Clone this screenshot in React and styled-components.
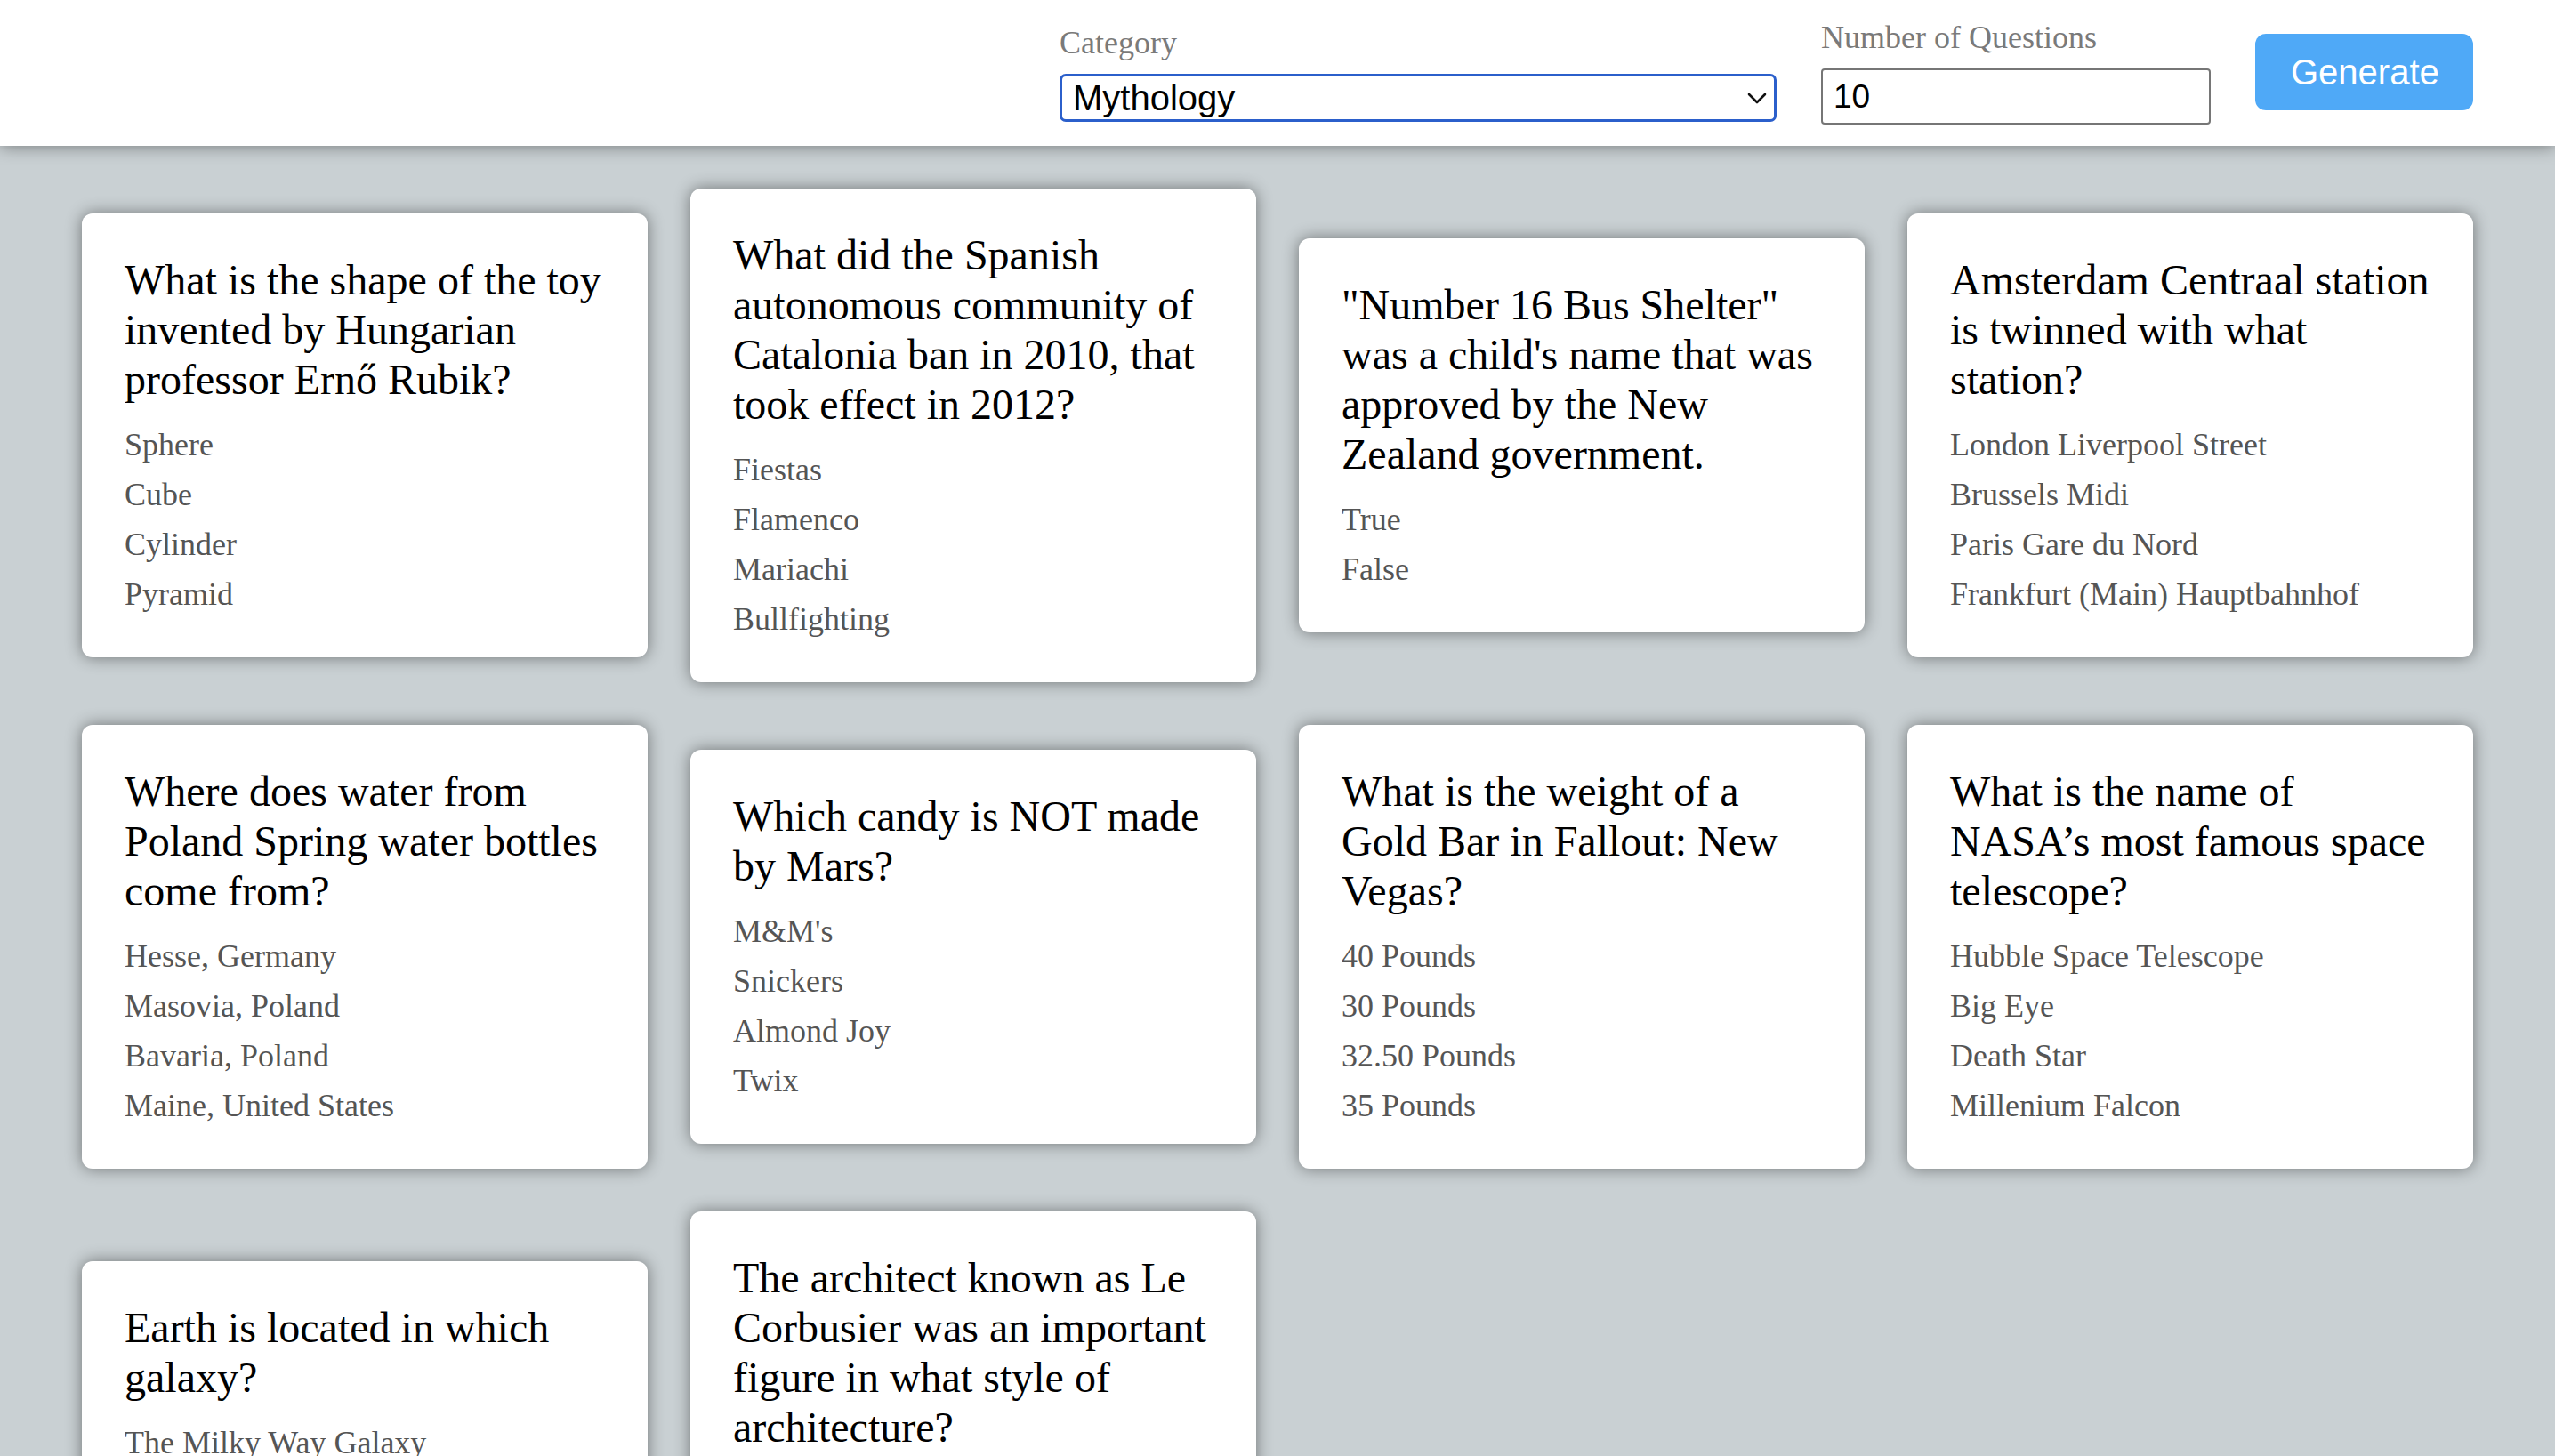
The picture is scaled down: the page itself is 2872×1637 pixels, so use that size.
import React from "react";
import styled, { createGlobalStyle } from "styled-components";

const GlobalStyle = createGlobalStyle`
  html, body {
    margin: 0;
    padding: 0;
    background: #c9d0d3;
    font-family: "Liberation Serif", "Times New Roman", serif;
  }
  * { box-sizing: border-box; }
`;

const Header = styled.header`
  position: relative;
  z-index: 2;
  height: 164px;
  background: #ffffff;
  box-shadow: 0 0 18px rgba(0, 0, 0, 0.45);
  display: flex;
  align-items: center;
  justify-content: flex-end;
  padding: 0 92px;
  gap: 50px;
`;

const Field = styled.div`
  display: flex;
  flex-direction: column;
  gap: 14px;
  width: ${(p) => p.$width}px;
  margin-top: ${(p) => p.$offset || 0}px;
`;

const Label = styled.label`
  font-family: "Liberation Serif", "Times New Roman", serif;
  font-size: 36px;
  color: #7a7a7a;
  line-height: normal;
`;

const SelectWrap = styled.div`
  position: relative;
  height: 54px;
`;

const Select = styled.select`
  appearance: none;
  -webkit-appearance: none;
  width: 100%;
  height: 54px;
  border: 3px solid #2b5fcb;
  border-radius: 7px;
  background: #ffffff;
  font-family: "Liberation Sans", Arial, sans-serif;
  font-size: 40px;
  color: #000;
  padding: 0 50px 0 12px;
  outline: none;
`;

const Chevron = styled.svg`
  position: absolute;
  right: 11px;
  top: 21px;
  width: 22px;
  height: 13px;
  pointer-events: none;
`;

const Input = styled.input`
  width: 100%;
  height: 63px;
  border: 2px solid #767676;
  border-radius: 4px;
  background: #ffffff;
  font-family: "Liberation Sans", Arial, sans-serif;
  font-size: 37px;
  color: #000;
  padding: 0 12px;
  outline: none;
`;

const Button = styled.button`
  height: 86px;
  width: 245px;
  margin-top: -2px;
  border: none;
  border-radius: 12px;
  background: #4fa9f7;
  color: #ffffff;
  font-family: "Liberation Sans", Arial, sans-serif;
  font-size: 40px;
  padding: 0 40px;
  cursor: pointer;
`;

const Grid = styled.main`
  display: grid;
  grid-template-columns: repeat(4, 1fr);
  column-gap: 48px;
  row-gap: 48px;
  align-items: center;
  padding: 48px 92px;
`;

const Card = styled.article`
  background: #ffffff;
  border-radius: 12px;
  box-shadow: 0 0 18px rgba(0, 0, 0, 0.45);
  padding: 47px 48px 50px;
`;

const Question = styled.h2`
  margin: 0 0 25px;
  font-family: "Liberation Serif", "Times New Roman", serif;
  font-weight: normal;
  font-size: 48px;
  line-height: 56px;
  color: #000;
`;

const Answers = styled.ul`
  list-style: none;
  margin: 0;
  padding: 0;
  display: flex;
  flex-direction: column;
  gap: 15px;
`;

const Answer = styled.li`
  font-family: "Liberation Serif", "Times New Roman", serif;
  font-size: 36px;
  line-height: 41px;
  color: #555555;
`;

const questions = [
  {
    q: "What is the shape of the toy invented by Hungarian professor Ernő Rubik?",
    a: ["Sphere", "Cube", "Cylinder", "Pyramid"],
  },
  {
    q: "What did the Spanish autonomous community of Catalonia ban in 2010, that took effect in 2012?",
    a: ["Fiestas", "Flamenco", "Mariachi", "Bullfighting"],
  },
  {
    q: "\"Number 16 Bus Shelter\" was a child's name that was approved by the New Zealand government.",
    a: ["True", "False"],
  },
  {
    q: "Amsterdam Centraal station is twinned with what station?",
    a: ["London Liverpool Street", "Brussels Midi", "Paris Gare du Nord", "Frankfurt (Main) Hauptbahnhof"],
  },
  {
    q: "Where does water from Poland Spring water bottles come from?",
    a: ["Hesse, Germany", "Masovia, Poland", "Bavaria, Poland", "Maine, United States"],
  },
  {
    q: "Which candy is NOT made by Mars?",
    a: ["M&M's", "Snickers", "Almond Joy", "Twix"],
  },
  {
    q: "What is the weight of a Gold Bar in Fallout: New Vegas?",
    a: ["40 Pounds", "30 Pounds", "32.50 Pounds", "35 Pounds"],
  },
  {
    q: "What is the name of NASA’s most famous space telescope?",
    a: ["Hubble Space Telescope", "Big Eye", "Death Star", "Millenium Falcon"],
  },
  {
    q: "Earth is located in which galaxy?",
    a: ["The Milky Way Galaxy", "The Black Eye Galaxy", "The Sombrero Galaxy", "The Andromeda Galaxy"],
  },
  {
    q: "The architect known as Le Corbusier was an important figure in what style of architecture?",
    a: ["Modernist", "Brutalist", "Art Deco", "Gothic"],
  },
];

export default function App() {
  return (
    <>
      <GlobalStyle />
      <Header>
        <Field $width={806}>
          <Label>Category</Label>
          <SelectWrap>
            <Select defaultValue="mythology">
              <option value="mythology">Mythology</option>
              <option value="general">General Knowledge</option>
              <option value="history">History</option>
            </Select>
            <Chevron viewBox="0 0 22 13" fill="none">
              <path d="M2 2 L11 11 L20 2" stroke="#111" strokeWidth="2.6" strokeLinecap="round" strokeLinejoin="round" />
            </Chevron>
          </SelectWrap>
        </Field>
        <Field $width={438} $offset={-3}>
          <Label>Number of Questions</Label>
          <Input type="number" defaultValue="10" />
        </Field>
        <Button>Generate</Button>
      </Header>
      <Grid>
        {questions.map((item, i) => (
          <Card key={i}>
            <Question>{item.q}</Question>
            <Answers>
              {item.a.map((ans) => (
                <Answer key={ans}>{ans}</Answer>
              ))}
            </Answers>
          </Card>
        ))}
      </Grid>
    </>
  );
}
